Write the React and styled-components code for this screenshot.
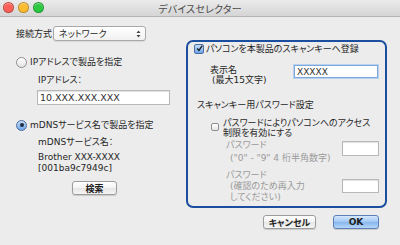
import React from 'react'
import styled, { createGlobalStyle } from 'styled-components'

const GlobalStyle = createGlobalStyle`
html, body {
  margin: 0;
  padding: 0;
  background: #ececec;
}
body {
  font-family: "DejaVu Sans", "Noto Sans CJK JP", sans-serif;
  font-feature-settings: "palt";
  color: #262626;
}
`;

const Window = styled.div`
width: 400px;
height: 245px;
background: #ececec;
overflow: hidden;
display: flex;
flex-direction: column;
`;

const TitleBar = styled.div`
height: 16px;
flex-shrink: 0;
position: relative;
display: flex;
align-items: center;
justify-content: center;
background: linear-gradient(#ebebeb, #d5d5d5);
border-bottom: 1px solid #b3b3b3;
`;

const Lights = styled.div`
position: absolute;
left: 3px;
top: 2px;
display: flex;
gap: 4px;
`;

const Light = styled.span`
width: 9px;
height: 9px;
border-radius: 50%;
background: ${p => p.$c};
border: 0.5px solid rgba(0, 0, 0, 0.25);
box-shadow: inset 0 1px 1px rgba(255, 255, 255, 0.4);
`;

const Title = styled.div`
font-size: 10px;
color: #4a4a4a;
letter-spacing: 0.2px;
`;

const Content = styled.div`
display: flex;
flex-direction: column;
`;

const Main = styled.div`
display: flex;
`;

const LeftCol = styled.div`
width: 186px;
box-sizing: border-box;
padding: 9px 0 0 16px;
display: flex;
flex-direction: column;
font-size: 9px;
`;

const ConnRow = styled.div`
display: flex;
align-items: center;
height: 15px;
gap: 1px;
`;

const Select = styled.div`
width: 93px;
height: 15px;
box-sizing: border-box;
border: 1px solid #a9a9a9;
border-radius: 3px;
background: linear-gradient(#ffffff, #f1f1f1);
box-shadow: 0 1px 0 rgba(0, 0, 0, 0.08);
display: flex;
align-items: center;
justify-content: space-between;
padding: 0 4px 0 5px;
`;

const RadioRow = styled.div`
display: flex;
align-items: center;
gap: 3px;
line-height: 14px;
margin-top: ${p => p.$mt}px;
`;

const Radio = styled.span`
width: 11px;
height: 11px;
box-sizing: border-box;
border-radius: 50%;
display: flex;
align-items: center;
justify-content: center;
border: 1px solid ${p => (p.$on ? '#4d6e9f' : '#8e8e8e')};
background: ${p => (p.$on
    ? 'linear-gradient(#c7ddf6, #6aa5ea)'
    : 'linear-gradient(#ffffff, #e4e4e4)')};
&::after {
  content: '';
  display: ${p => (p.$on ? 'block' : 'none')};
  width: 4px;
  height: 4px;
  border-radius: 50%;
  background: #1f2c3f;
}
`;

const SubLabel = styled.div`
padding-left: 22px;
line-height: ${p => p.$lh || 12}px;
margin-top: ${p => p.$mt || 0}px;
`;

const TextInput = styled.div`
box-sizing: border-box;
width: ${p => p.$w}px;
height: ${p => p.$h || 15}px;
margin-top: ${p => p.$mt || 0}px;
margin-left: ${p => p.$ml || 0}px;
margin-right: ${p => p.$mr || 0}px;
background: #fff;
border: 1px solid ${p => (p.$focus ? '#7ea7dc' : '#b8b8b8')};
box-shadow: ${p => (p.$focus
    ? '0 0 0 1px #b9d1f0'
    : 'inset 0 1px 1px rgba(0, 0, 0, 0.12)')};
font-size: ${p => p.$fs || 9.5}px;
color: #333;
display: flex;
align-items: center;
padding-left: 2px;
flex-shrink: 0;
`;

const Button = styled.div`
box-sizing: border-box;
width: ${p => p.$w}px;
height: 14px;
margin-top: ${p => p.$mt || 0}px;
margin-left: ${p => p.$ml || 0}px;
border-radius: 3px;
border: 1px solid ${p => (p.$primary ? '#5c7fb6' : '#9c9c9c')};
background: ${p => (p.$primary
    ? 'linear-gradient(#d6e8fd, #9fc6f3 50%, #87b6ee 51%, #b6d6f8)'
    : 'linear-gradient(#ffffff, #f3f3f3 50%, #e6e6e6 51%, #f4f4f4)')};
box-shadow: 0 1px 1px rgba(0, 0, 0, 0.15);
display: flex;
align-items: center;
justify-content: center;
font-size: 9px;
font-weight: bold;
color: #1e1e1e;
`;

const Panel = styled.div`
margin-top: 23px;
width: 201px;
height: 168px;
box-sizing: border-box;
border: 2px solid #1c4ea0;
border-radius: 7px;
padding: 0 6px 0 0;
display: flex;
flex-direction: column;
font-size: 9px;
`;

const CheckRow = styled.div`
display: flex;
align-items: ${p => p.$top ? 'flex-start' : 'center'};
gap: ${p => p.$gap || 2}px;
padding-left: ${p => p.$pl}px;
line-height: ${p => p.$lh}px;
margin-top: ${p => p.$mt || 0}px;
`;

const Check = styled.span`
width: ${p => p.$size}px;
height: ${p => p.$size}px;
box-sizing: border-box;
border-radius: 2px;
flex-shrink: 0;
margin-top: ${p => p.$mt || 0}px;
display: flex;
align-items: center;
justify-content: center;
border: 1px solid ${p => (p.$on ? '#4d6e9f' : '#8e8e8e')};
background: ${p => (p.$on
    ? 'linear-gradient(#c7ddf6, #6aa5ea)'
    : 'linear-gradient(#ffffff, #e6e6e6)')};
`;

const FieldRow = styled.div`
display: flex;
justify-content: space-between;
align-items: flex-start;
padding-left: ${p => p.$pl}px;
margin-top: ${p => p.$mt}px;
`;

const FieldLabel = styled.div`
line-height: ${p => p.$lh}px;
color: ${p => (p.$muted ? '#9a9a9a' : '#262626')};
`;

const Indent = styled.div`
padding-left: ${p => p.$pl}px;
`;

const SectionTitle = styled.div`
padding-left: 9px;
line-height: 12px;
margin-top: 14px;
`;

const Footer = styled.div`
display: flex;
justify-content: flex-end;
gap: 17px;
padding-right: 21px;
margin-top: 7px;
`;

const Arrows = () => (
  <svg width="5" height="8" viewBox="0 0 5 8">
    <path d="M2.5 0.5 L4.5 3 L0.5 3 Z" fill="#444" />
    <path d="M2.5 7.5 L4.5 5 L0.5 5 Z" fill="#444" />
  </svg>
)

const Tick = () => (
  <svg width="9" height="9" viewBox="0 0 9 9" style={{ marginTop: -2, marginLeft: 1 }}>
    <path d="M1.5 4.5 L3.8 7 L8 0.8" stroke="#1a1a1a" strokeWidth="1.6" fill="none" />
  </svg>
)

const App = () => {
  return (
    <Window>
      <GlobalStyle />
      <TitleBar>
        <Lights>
          <Light $c="#fc5f57" />
          <Light $c="#fdbb2e" />
          <Light $c="#2bc840" />
        </Lights>
        <Title>デバイスセレクター</Title>
      </TitleBar>
      <Content>
        <Main>
          <LeftCol>
            <ConnRow>
              <span>接続方式</span>
              <Select>
                <span>ネットワーク</span>
                <Arrows />
              </Select>
            </ConnRow>
            <RadioRow $mt={14}>
              <Radio />
              <span>IPアドレスで製品を指定</span>
            </RadioRow>
            <SubLabel $mt={5}>IPアドレス：</SubLabel>
            <TextInput $w={133} $mt={4} $ml={21}>10.XXX.XXX.XXX</TextInput>
            <RadioRow $mt={13}>
              <Radio $on />
              <span>mDNSサービス名で製品を指定</span>
            </RadioRow>
            <SubLabel $mt={4}>mDNSサービス名：</SubLabel>
            <SubLabel $mt={4} $lh={11}>
              Brother XXX-XXXX<br />[001ba9c7949c]
            </SubLabel>
            <Button $w={45} $mt={7} $ml={56}>検索</Button>
          </LeftCol>
          <Panel>
            <CheckRow $pl={6} $lh={14} $gap={2}>
              <Check $on $size={10}><Tick /></Check>
              <span>パソコンを本製品のスキャンキーへ登録</span>
            </CheckRow>
            <FieldRow $pl={22} $mt={9}>
              <FieldLabel $lh={10}>
                表示名
                <Indent $pl={2}>(最大15文字)</Indent>
              </FieldLabel>
              <TextInput $w={84} $h={13} $mr={1} $focus $fs={9}>XXXXX</TextInput>
            </FieldRow>
            <SectionTitle>スキャンキー用パスワード設定</SectionTitle>
            <CheckRow $pl={23} $lh={10} $gap={4} $mt={7} $top>
              <Check $size={8} $mt={5} />
              <span>パスワードによりパソコンへのアクセス<br />制限を有効にする</span>
            </CheckRow>
            <FieldRow $pl={38} $mt={1}>
              <FieldLabel $lh={13} $muted>
                パスワード
                <Indent $pl={4}>("0" - "9" 4 桁半角数字)</Indent>
              </FieldLabel>
              <TextInput $w={37} $mt={2} />
            </FieldRow>
            <FieldRow $pl={38} $mt={5}>
              <FieldLabel $lh={11} $muted>
                パスワード
                <Indent $pl={4}>(確認のため再入力<br />してください)</Indent>
              </FieldLabel>
              <TextInput $w={37} $h={14} $mt={9} />
            </FieldRow>
          </Panel>
        </Main>
        <Footer>
          <Button $w={53}>キャンセル</Button>
          <Button $w={46} $primary>OK</Button>
        </Footer>
      </Content>
    </Window>
  )
}

export default App
